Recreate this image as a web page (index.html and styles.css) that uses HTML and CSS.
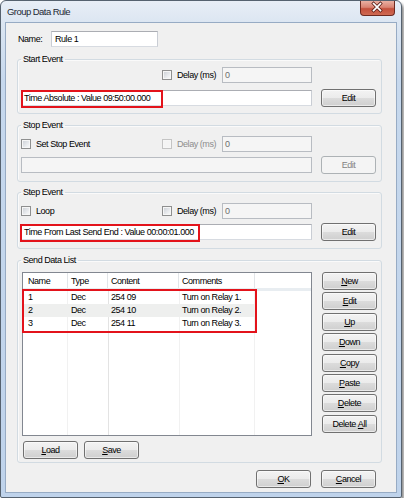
FILE: index.html
```html
<!DOCTYPE html>
<html>
<head>
<meta charset="utf-8">
<title>Group Data Rule</title>
<link rel="stylesheet" href="styles.css">
</head>
<body>
<div class="window">
  <div class="titlebar">
    <span class="title">Group Data Rule</span>
    <span class="close">
      <svg width="35" height="15" viewBox="0 0 35 15">
        <path d="M14 3.5 L21 10.5 M21 3.5 L14 10.5" stroke="#5a2119" stroke-width="3.4" stroke-linecap="square" fill="none"/>
        <path d="M14 3.5 L21 10.5 M21 3.5 L14 10.5" stroke="#ffffff" stroke-width="1.8" stroke-linecap="square" fill="none"/>
      </svg>
    </span>
  </div>
  <div class="client">
    <div class="name-row">
      <span class="name-label">Name:</span>
      <span class="field name-field">Rule 1</span>
    </div>

    <fieldset class="group group-start">
      <legend>Start Event</legend>
      <div class="row row-top">
        <span class="lead"></span>
        <span class="check delay"><span class="box"></span>Delay (ms)</span>
        <span class="field field-off delay-field">0</span>
      </div>
      <div class="row row-main">
        <span class="field event-field">Time Absolute : Value 09:50:00.000<span class="mark mark-start"></span></span>
        <span class="btn">Edit</span>
      </div>
    </fieldset>

    <fieldset class="group group-stop">
      <legend>Stop Event</legend>
      <div class="row row-top">
        <span class="lead check"><span class="box"></span>Set Stop Event</span>
        <span class="check delay check-off"><span class="box"></span>Delay (ms)</span>
        <span class="field field-off delay-field">0</span>
      </div>
      <div class="row row-main">
        <span class="field field-off event-field"></span>
        <span class="btn btn-off">Edit</span>
      </div>
    </fieldset>

    <fieldset class="group group-step">
      <legend>Step Event</legend>
      <div class="row row-top">
        <span class="lead check"><span class="box"></span>Loop</span>
        <span class="check delay"><span class="box"></span>Delay (ms)</span>
        <span class="field field-off delay-field">0</span>
      </div>
      <div class="row row-main">
        <span class="field event-field">Time From Last Send End : Value 00:00:01.000<span class="mark mark-step"></span></span>
        <span class="btn">Edit</span>
      </div>
    </fieldset>

    <fieldset class="group group-send">
      <legend>Send Data List</legend>
      <div class="send-main">
        <div class="list">
          <div class="list-head">
            <span>Name</span><span>Type</span><span>Content</span><span>Comments</span><span class="filler"></span>
          </div>
          <div class="list-body">
            <div class="list-row"><span>1</span><span>Dec</span><span>254 09</span><span>Turn on Relay 1.</span></div>
            <div class="list-row alt"><span>2</span><span>Dec</span><span>254 10</span><span>Turn on Relay 2.</span></div>
            <div class="list-row"><span>3</span><span>Dec</span><span>254 11</span><span>Turn on Relay 3.</span></div>
          </div>
          <span class="mark mark-list"></span>
        </div>
        <div class="side">
          <span class="btn"><u>N</u>ew</span>
          <span class="btn"><u>E</u>dit</span>
          <span class="btn"><u>U</u>p</span>
          <span class="btn"><u>D</u>own</span>
          <span class="btn"><u>C</u>opy</span>
          <span class="btn"><u>P</u>aste</span>
          <span class="btn"><u>D</u>elete</span>
          <span class="btn">Delete&nbsp;<u>A</u>ll</span>
        </div>
      </div>
      <div class="send-foot">
        <span class="btn"><u>L</u>oad</span>
        <span class="btn"><u>S</u>ave</span>
      </div>
    </fieldset>

    <div class="dialog-foot">
      <span class="btn"><u>O</u>K</span>
      <span class="btn"><u>C</u>ancel</span>
    </div>
  </div>
</div>
</body>
</html>
```

FILE: styles.css
```css
* { box-sizing: border-box; }

body {
  margin: 0;
  background: #ffffff;
  font-family: "Liberation Sans", Arial, sans-serif;
  font-size: 9px;
  letter-spacing: -0.45px;
  color: #000;
}

.window {
  width: 402px;
  height: 498px;
  border: 1px solid #56626f;
  border-radius: 6px 6px 2px 2px;
  background: linear-gradient(180deg, #e8eef6 0, #dce6f2 21px, #c6d8ed 80px, #bfd3eb 100%);
  box-shadow: 2px 3px 3px rgba(0, 0, 0, 0.45);
  display: flex;
  flex-direction: column;
}

.titlebar {
  height: 21px;
  flex: none;
  display: flex;
  align-items: flex-start;
  padding: 0 6px;
}

.title {
  line-height: 22px;
  font-size: 9.5px;
  letter-spacing: -0.55px;
  color: #1c2733;
}

.close {
  margin-left: auto;
  width: 35px;
  height: 15px;
  border: 1px solid #6e2a20;
  border-top: none;
  border-radius: 0 0 4px 4px;
  background: linear-gradient(180deg, #eab0a2 0%, #d98372 45%, #c4503c 55%, #cf6a52 100%);
  display: flex;
  align-items: center;
  justify-content: center;
  overflow: hidden;
}

.close svg { display: block; margin: -1px 0 0 -1px; }

.client {
  flex: 1;
  margin: 0 4px 4px;
  border: 1px solid #97abc4;
  background: #f0f0f0;
  padding: 8px 14px 0 11px;
  display: flex;
  flex-direction: column;
}

.name-row {
  display: flex;
  align-items: center;
  height: 16px;
  margin-bottom: 6px;
}

.name-label {
  width: 34px;
  padding-left: 1px;
}

.field {
  display: block;
  height: 16px;
  border: 1px solid;
  border-color: #abadb3 #c9cdd4 #d7dbe1 #c9cdd4;
  background: #ffffff;
  padding: 0 2px;
  line-height: 14px;
  white-space: nowrap;
}

.field-off {
  background: #f5f5f5;
  border-color: #b8bcc2;
  color: #6d6d6d;
}

.name-field { width: 107px; padding-left: 3px; }

.group {
  margin: 0;
  min-width: 0;
  border: 1px solid #d2dbe2;
  border-radius: 3px;
  padding: 5px 0 7px 3px;
  box-shadow: inset 1px 1px 0 #fafafa;
}

.group legend {
  padding: 0 2px;
  line-height: 12px;
}

.group-start { padding-top: 2px; padding-bottom: 6px; }
.group-stop { margin-top: 5px; }
.group-step { margin-top: 4px; }
.group-send { margin-top: 5px; padding: 6px 0 3px 3px; }

.row { display: flex; align-items: center; }
.row-top { height: 16px; }
.row-main { height: 18px; margin-top: 4px; }
.group-start .row-main { margin-top: 6px; }

.lead { width: 141px; flex: none; }
.delay { width: 60px; flex: none; }
.delay-field { width: 90px; }

.event-field {
  width: 291px;
  position: relative;
}

.row-main .btn { margin-left: 9px; }

.check {
  display: flex;
  align-items: center;
  gap: 5px;
  white-space: nowrap;
}

.box {
  width: 10px;
  height: 10px;
  flex: none;
  border: 1px solid #8e8f8f;
  background: linear-gradient(135deg, #c9cdd3 0%, #eef0f2 70%, #fafafa 100%);
  box-shadow: inset 0 0 0 1px #f6f6f6;
}

.check-off { color: #8d8d8d; }
.check-off .box {
  border-color: #c4c4c4;
  background: #f4f4f4;
}

.btn {
  display: flex;
  align-items: center;
  justify-content: center;
  width: 55px;
  height: 18px;
  flex: none;
  border: 1px solid #707070;
  border-radius: 3px;
  background: linear-gradient(180deg, #f3f3f3 0%, #ebebeb 50%, #dcdcdc 50%, #cfcfcf 100%);
  box-shadow: inset 0 0 0 1px rgba(255, 255, 255, 0.55);
  white-space: nowrap;
}

.btn-off {
  border-color: #adb2b5;
  background: #f4f4f4;
  color: #838383;
  box-shadow: none;
}

.mark {
  position: absolute;
  border: 2px solid #e3131b;
}

.mark-start { left: -1px; top: -1px; width: 142px; height: 18px; }
.mark-step { left: -2px; top: -1px; width: 180px; height: 18px; }
.mark-list { left: -1px; top: 16px; width: 235px; height: 44px; }

.send-main {
  display: flex;
  align-items: flex-start;
}

.list {
  position: relative;
  margin-left: 1px;
  width: 290px;
  height: 164px;
  border: 1px solid #828790;
  background: #ffffff;
  display: flex;
  flex-direction: column;
}

.list-head {
  display: grid;
  grid-template-columns: 45px 40px 71px 76px 1fr;
  height: 18px;
  border-bottom: 3px solid #e8edf1;
  flex: none;
}

.list-head span {
  padding: 2px 0 0 3px;
  line-height: 13px;
  border-right: 1px solid #e2e5e8;
}

.list-head span:first-child,
.list-row span:first-child { padding-left: 5px; }

.list-head .filler { border-right: none; }

.list-body {
  flex: 1;
  background:
    linear-gradient(#e3e3e3, #e3e3e3) 85px 0 / 1px 100% no-repeat,
    linear-gradient(#f1f1f1, #f1f1f1) 44px 0 / 1px 100% no-repeat,
    linear-gradient(#f1f1f1, #f1f1f1) 156px 0 / 1px 100% no-repeat,
    linear-gradient(#f1f1f1, #f1f1f1) 231px 0 / 1px 100% no-repeat;
}

.list-row {
  display: grid;
  grid-template-columns: 45px 40px 71px 76px;
  width: 232px;
  height: 13px;
  line-height: 13px;
}

.list-row span { padding-left: 3px; white-space: nowrap; }

.list-row.alt { background: #eeefee; }

.side {
  margin-left: 10px;
  display: flex;
  flex-direction: column;
  gap: 2.4px;
}

.send-foot {
  display: flex;
  gap: 6px;
  margin-top: 5px;
  padding-left: 2px;
}

.dialog-foot {
  display: flex;
  justify-content: flex-end;
  gap: 10px;
  margin-top: 7px;
  padding-right: 6px;
}

u { text-decoration: underline; text-underline-offset: 1px; }
```
